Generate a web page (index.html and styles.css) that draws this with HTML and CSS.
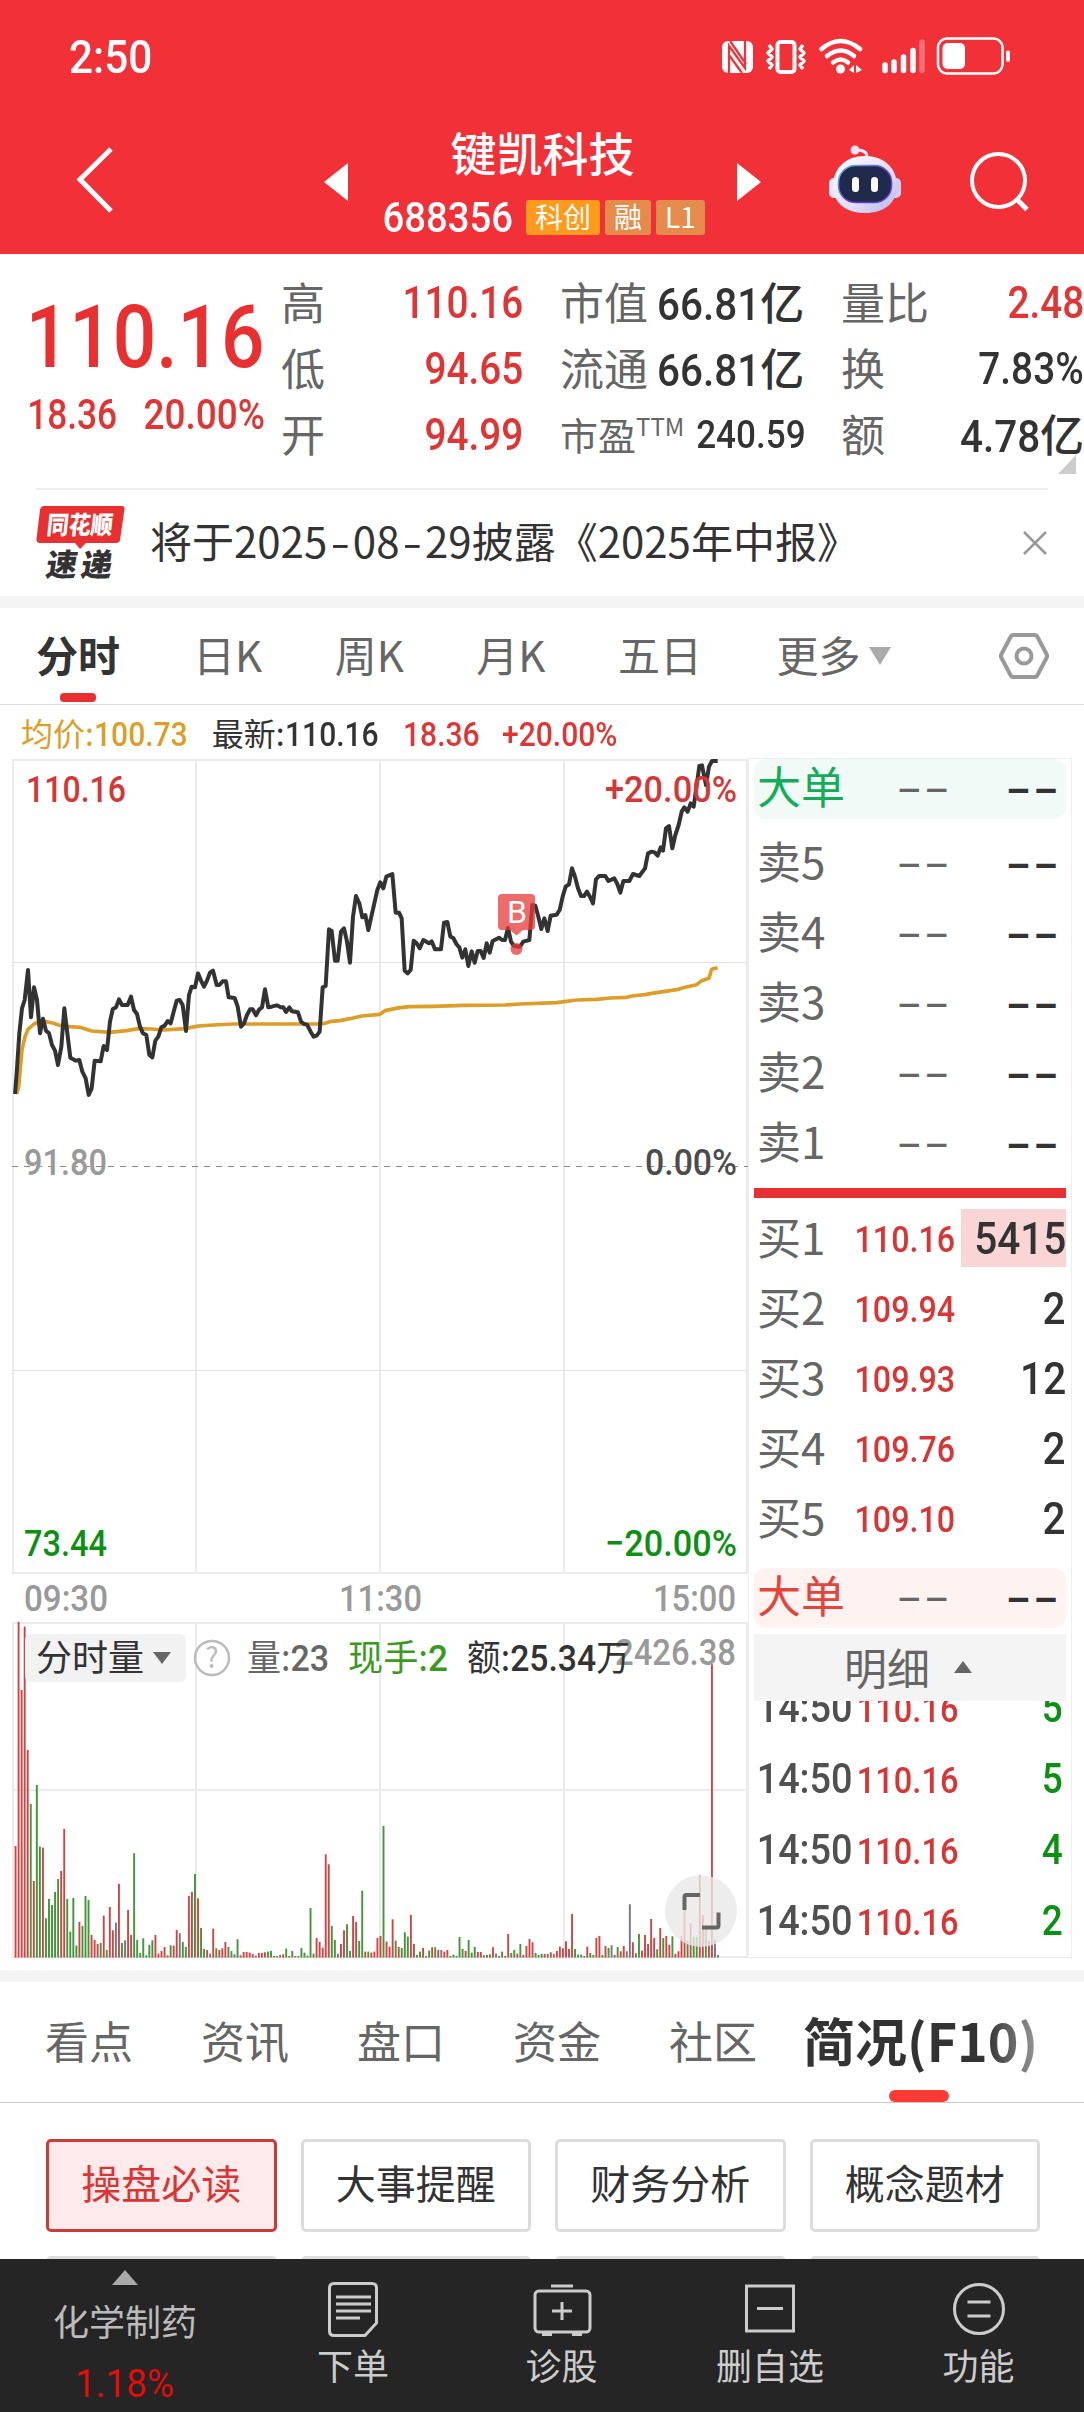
FILE: index.html
```html
<!DOCTYPE html>
<html lang="zh-CN">
<head>
    <meta charset="UTF-8">
    <meta name="viewport" content="width=device-width, initial-scale=1.0">
    <title>键凯科技 688356</title>
    <link rel="stylesheet" href="styles.css">
</head>
<body>
    <div class="app">
        <header class="header">
            <div class="status-bar">
                <span class="num clock">2:50</span>
                <svg class="status-icons" width="292" height="40" viewBox="0 0 292 40" fill="none" stroke="#fff">
                    <!-- NFC -->
                    <rect x="0" y="4" width="31" height="32" rx="6" fill="#fff" stroke="none"/>
                    <path d="M7 36V9L23 31V4M8 4L24 27M7 18L20 36" stroke="#f13038" stroke-width="2.2"/>
                    <!-- vibrate -->
                    <rect x="55.500" y="5" width="17" height="30" rx="3" stroke-width="4"/>
                    <path d="M47 8l3 4-4 4 4 4-4 4 4 4-3 4M81 8l-3 4 4 4-4 4 4 4-4 4 3 4" stroke-width="3.500" stroke-linejoin="round"/>
                    <!-- wifi -->
                    <g stroke-width="4.500" stroke-linecap="round">
                        <path d="M99.500 12q19-16 38.500 0"/>
                        <path d="M105 19q14-11 27 0"/>
                        <path d="M111 25.500q8-6 15 0"/>
                    </g>
                    <circle cx="118.500" cy="32" r="4.500" fill="#fff" stroke="none"/>
                    <path d="M132 28v8l-5-3zM134 36v-8l6 5z" fill="#fff" stroke="none"/>
                    <!-- signal -->
                    <g stroke-width="5.500" stroke-linecap="round">
                        <path d="M163 28v5.500M172 25v8.500M181.500 20v13.500M191 13.500v20"/>
                        <path d="M200 5v28.500" opacity=".3"/>
                    </g>
                    <!-- battery -->
                    <rect x="216" y="1.500" width="64.500" height="35" rx="9" stroke-width="2.500"/>
                    <rect x="220.500" y="6" width="22.500" height="26" rx="5" fill="#fff" stroke="none"/>
                    <rect x="284" y="13.500" width="4" height="11.500" rx="2" fill="#fff" stroke="none"/>
                </svg>
            </div>
            <div class="nav-bar">
                <svg class="back" width="40" height="70" viewBox="0 0 40 70">
                    <path d="M36 4L5 34.500L36 66" fill="none" stroke="#fff" stroke-width="5"/>
                </svg>
                <svg class="prev" width="24" height="38" viewBox="0 0 24 38"><path d="M24 0v38L0 19z" fill="#fff"/></svg>
                <div class="stock">
                    <div class="stock-name">键凯科技</div>
                    <div class="stock-code">
                        <span class="num code">688356</span>
                        <span class="tag tag-main">科创</span>
                        <span class="tag">融</span>
                        <span class="tag">L1</span>
                    </div>
                </div>
                <svg class="next" width="24" height="38" viewBox="0 0 24 38"><path d="M0 0v38l24-19z" fill="#fff"/></svg>
                <svg class="robot" width="74" height="70" viewBox="0 0 74 70">
                    <defs>
                        <linearGradient id="shell" x1="0" y1="0" x2="1" y2="1">
                            <stop offset="0" stop-color="#fff"/>
                            <stop offset=".6" stop-color="#e2def6"/>
                            <stop offset="1" stop-color="#b4b4f0"/>
                        </linearGradient>
                        <linearGradient id="rim" x1="0" y1="0" x2="1" y2="1">
                            <stop offset="0" stop-color="#5cc8e8"/>
                            <stop offset=".6" stop-color="#7030d8"/>
                            <stop offset="1" stop-color="#4a48c0"/>
                        </linearGradient>
                    </defs>
                    <path d="M39 12q0-7-10-7" fill="none" stroke="#eee6f6" stroke-width="3"/>
                    <circle cx="27" cy="5" r="4.500" fill="#f4e4f2"/>
                    <rect x="1" y="33" width="12" height="20" rx="5" fill="#e8e6fa"/>
                    <rect x="61" y="33" width="12" height="20" rx="5" fill="#cfcdf4"/>
                    <path d="M37 11C57 11 69 24 69 41C69 58 56 68 37 68C18 68 5 58 5 41C5 24 17 11 37 11z" fill="url(#shell)"/>
                    <rect x="10.500" y="20.500" width="53" height="37" rx="17" fill="#202a4c" stroke="url(#rim)" stroke-width="1.500"/>
                    <rect x="24" y="32" width="7" height="15" rx="3.500" fill="#fff"/>
                    <rect x="43" y="32" width="7" height="15" rx="3.500" fill="#fff"/>
                </svg>
                <svg class="search" width="62" height="62" viewBox="0 0 62 62" fill="none" stroke="#fff" stroke-width="4">
                    <circle cx="29.500" cy="29.500" r="26.500"/>
                    <path d="M47.500 48L58 58.500" stroke-width="5"/>
                </svg>
            </div>
        </header>

        <section class="quote">
            <div class="price-box">
                <div class="price"><span class="num">110.16</span></div>
                <div class="change"><span class="num diff">18.36</span><span class="num">20.00%</span></div>
            </div>
            <div class="stats">
                <div class="stat"><label>高</label><span class="num red">110.16</span></div>
                <div class="stat"><label>低</label><span class="num red">94.65</span></div>
                <div class="stat"><label>开</label><span class="num red">94.99</span></div>
            </div>
            <div class="stats">
                <div class="stat"><label>市值</label><span class="val"><span class="num">66.81</span>亿</span></div>
                <div class="stat"><label>流通</label><span class="val"><span class="num">66.81</span>亿</span></div>
                <div class="stat small"><label>市盈<sup>TTM</sup></label><span class="num">240.59</span></div>
            </div>
            <div class="stats last">
                <div class="stat"><label>量比</label><span class="num red">2.48</span></div>
                <div class="stat"><label>换</label><span class="num">7.83%</span></div>
                <div class="stat"><label>额</label><span class="val"><span class="num">4.78</span>亿</span></div>
            </div>
            <span class="corner"></span>
        </section>

        <section class="news">
            <svg class="news-logo" width="90" height="76" viewBox="0 0 90 76">
                <path d="M8 1H86Q89 1 88.500 4L84 35Q83.500 38 80 38H50L44 44L39 38H4Q0 38 .500 34L4 5Q5 1 8 1z" fill="#e83030"/>
                <text x="13" y="29" class="logo-top" textLength="66" lengthAdjust="spacingAndGlyphs" transform="skewX(-6)">同花顺</text>
                <text x="20" y="71" class="logo-bottom" textLength="66" transform="skewX(-9)">速递</text>
            </svg>
            <p>将于2025<i>-</i>08<i>-</i>29披露《2025年中报》</p>
            <svg class="close" width="26" height="26" viewBox="0 0 26 26"><path d="M2 2l22 22M24 2L2 24" stroke="#999" stroke-width="2.500"/></svg>
        </section>

        <nav class="period-tabs">
            <span class="tab active">分时</span>
            <span class="tab">日K</span>
            <span class="tab">周K</span>
            <span class="tab">月K</span>
            <span class="tab">五日</span>
            <span class="tab more">更多</span>
            <span class="more-arrow"></span>
            <svg width="50" height="48" viewBox="0 0 50 48" fill="none" stroke="#999" stroke-width="4">
                <path d="M14.500 3h21q2 0 3 2l9 17q1 2 0 4l-9 17q-1 2-3 2h-21q-2 0-3-2l-9-17q-1-2 0-4l9-17q1-2 3-2z"/>
                <circle cx="25" cy="24" r="7.500"/>
            </svg>
        </nav>

        <div class="info-line">
            <span class="orange">均价:<b class="num">100.73</b></span>
            <span>最新:<b class="num">110.16</b></span>
            <span class="red"><b class="num">18.36</b></span>
            <span class="red"><b class="num">+20.00%</b></span>
        </div>

        <section class="market">
            <svg class="chart" width="748" height="1200" viewBox="0 0 748 1200">
                <g class="grid">
                    <path d="M12 2H748M13 2V815M196 2V815M380 2V815M564 2V815M747 2V815M12 815H748"/>
                    <path d="M12 204.500H748M12 612.500H748" stroke-width="1"/>
                    <path d="M12 865H748M13 865V1199M196 865V1199M380 865V1199M564 865V1199M747 865V1199M12 1032H748M12 1199H748"/>
                </g>
                <path class="zero-line" d="M12 408.500H748"/>
                <g class="lines" transform="translate(0 -18) scale(.33333)">
                    <polyline class="avg" points="50,1062 56,1040 66,930 75,890 84,868 102,852 115,846 140,845 160,850 185,858 240,862 275,873 330,877 380,872 415,866 455,867 490,870 555,866 595,858 640,855 700,852 950,852 975,850 995,844 1020,842 1050,836 1085,828 1140,823 1155,812 1200,803 1230,800 1300,799 1390,796 1515,795 1560,792 1670,788 1730,780 1790,778 1830,774 1880,772 1895,768 1935,764 1955,760 2035,748 2055,742 2090,734 2105,722 2127,715 2135,688 2153,683"/>
                    <polyline class="now" points="45,1062 50,1000 58,880 66,805 74,780 84,690 93,832 102,742 111,780 120,880 129,836 138,872 147,880 156,915 165,932 174,975 184,920 193,805 202,880 211,953 228,962 238,960 247,995 257,1015 266,1065 275,1045 284,962 302,964 311,918 321,930 330,845 338,808 348,802 357,778 366,795 383,795 393,770 402,810 411,822 420,860 429,880 439,885 448,945 457,952 466,902 475,890 484,862 494,857 503,843 512,850 521,815 530,782 539,780 548,795 558,873 567,765 575,740 585,742 594,700 603,722 612,740 621,722 630,698 639,692 650,735 658,735 668,724 678,724 686,772 704,774 713,800 723,860 732,850 741,825 750,808 758,808 768,826 778,808 786,802 795,748 805,802 815,800 830,796 842,802 850,802 858,816 868,802 876,814 894,817 903,845 912,852 921,854 932,875 941,890 950,887 959,875 968,742 977,738 987,568 995,573 1005,662 1013,662 1023,575 1032,565 1041,605 1050,668 1059,530 1068,468 1078,490 1087,532 1096,525 1105,570 1114,530 1123,490 1132,450 1141,427 1150,445 1159,410 1177,402 1187,518 1197,518 1205,535 1214,692 1223,700 1232,690 1241,602 1250,610 1259,625 1270,600 1287,610 1295,604 1305,628 1323,628 1332,548 1342,546 1351,590 1360,594 1369,612 1378,622 1387,653 1396,628 1405,678 1415,634 1424,668 1433,633 1442,633 1451,654 1460,610 1469,638 1478,603 1497,593 1506,600 1515,600 1524,563 1533,605 1542,618 1560,620 1570,605 1588,600 1597,495 1606,497 1615,530 1624,567 1633,535 1643,573 1652,527 1670,524 1679,510 1688,470 1697,440 1707,433 1716,385 1725,410 1734,445 1743,468 1752,468 1761,455 1770,470 1779,490 1788,418 1797,408 1816,408 1825,423 1843,415 1852,432 1861,458 1870,423 1888,423 1899,402 1918,408 1935,385 1944,340 1955,335 1964,337 1973,347 1982,322 1989,332 1998,265 2007,258 2017,325 2026,285 2036,255 2045,215 2053,202 2063,215 2072,190 2081,200 2091,130 2098,78 2106,76 2118,135 2127,80 2136,63 2153,63"/>
                </g>

                <!-- buy point marker -->
                <g class="marker">
                    <path d="M502 136h29q4 0 4 4v28q0 4-4 4h-8l-6.500 5.500l-6.500-5.500h-8q-4 0-4-4v-28q0-4 4-4z"/>
                    <circle cx="516.500" cy="191" r="6"/>
                    <text x="517" y="165">B</text>
                </g>

                <g class="axis">
                    <text x="26" y="44" textLength="100" lengthAdjust="spacingAndGlyphs" class="t-red">110.16</text>
                    <text x="605" y="44" textLength="132" lengthAdjust="spacingAndGlyphs" class="t-red">+20.00%</text>
                    <text x="24" y="417" textLength="83" lengthAdjust="spacingAndGlyphs">91.80</text>
                    <text x="645" y="417" textLength="92" lengthAdjust="spacingAndGlyphs" class="t-dark">0.00%</text>
                    <text x="24" y="798" textLength="83" lengthAdjust="spacingAndGlyphs" class="t-green">73.44</text>
                    <text x="605" y="798" textLength="132" lengthAdjust="spacingAndGlyphs" class="t-green">−20.00%</text>
                    <text x="24" y="853" textLength="84" lengthAdjust="spacingAndGlyphs">09:30</text>
                    <text x="339" y="853" textLength="83" lengthAdjust="spacingAndGlyphs">11:30</text>
                    <text x="653" y="853" textLength="83" lengthAdjust="spacingAndGlyphs">15:00</text>
                    <text x="615" y="907" textLength="121" lengthAdjust="spacingAndGlyphs">2426.38</text>
                </g>

                <g id="volume-bars"></g>

                <g class="volume-head">
                    <rect x="25" y="876" width="161" height="48" rx="6" fill="#f2f2f2"/>
                    <text x="36" y="913">分时量</text>
                    <path d="M153 894h18l-9 12z" fill="#666"/>
                    <circle cx="212" cy="900" r="17" fill="none" stroke="#bbb" stroke-width="2.500"/>
                    <text x="212" y="910" class="help">?</text>
                    <text x="247" y="913" textLength="82" lengthAdjust="spacingAndGlyphs" fill="#666">量:<tspan class="v">23</tspan></text>
                    <text x="348" y="913" textLength="100" lengthAdjust="spacingAndGlyphs" fill="#3a9a20">现手:<tspan class="v">2</tspan></text>
                    <text x="467" y="913" textLength="163" lengthAdjust="spacingAndGlyphs">额:<tspan class="v">25.34</tspan>万</text>
                </g>

                <g class="expand">
                    <circle cx="701" cy="1153" r="36" fill="#e8e8e8" opacity=".8"/>
                    <path d="M684.500 1152v-13q0-2 2-2h13.500M702 1169.500h14.500q2 0 2-2v-13" fill="none" stroke="#666" stroke-width="4"/>
                </g>
            </svg>

            <div class="book">
                <div class="row big sell"><span class="name">大单</span><span class="dash">––</span><span class="dash dark">––</span></div>
                <div class="rows asks">
                    <div class="row"><span class="name">卖5</span><span class="dash">––</span><span class="dash dark">––</span></div>
                    <div class="row"><span class="name">卖4</span><span class="dash">––</span><span class="dash dark">––</span></div>
                    <div class="row"><span class="name">卖3</span><span class="dash">––</span><span class="dash dark">––</span></div>
                    <div class="row"><span class="name">卖2</span><span class="dash">––</span><span class="dash dark">––</span></div>
                    <div class="row"><span class="name">卖1</span><span class="dash">––</span><span class="dash dark">––</span></div>
                </div>
                <div class="split"></div>
                <div class="rows bids">
                    <div class="row"><span class="name">买1</span><span class="num bid">110.16</span><span class="lots hot"><b class="num">5415</b></span></div>
                    <div class="row"><span class="name">买2</span><span class="num bid">109.94</span><span class="lots"><b class="num">2</b></span></div>
                    <div class="row"><span class="name">买3</span><span class="num bid">109.93</span><span class="lots"><b class="num">12</b></span></div>
                    <div class="row"><span class="name">买4</span><span class="num bid">109.76</span><span class="lots"><b class="num">2</b></span></div>
                    <div class="row"><span class="name">买5</span><span class="num bid">109.10</span><span class="lots"><b class="num">2</b></span></div>
                </div>
                <div class="row big buy"><span class="name">大单</span><span class="dash">––</span><span class="dash dark">––</span></div>
                <div class="detail-head">明细<span class="up-arrow"></span></div>
                <div class="trades">
                    <div class="trade"><span class="num time">14:50</span><span class="num bid">110.16</span><span class="num lot">5</span></div>
                    <div class="trade"><span class="num time">14:50</span><span class="num bid">110.16</span><span class="num lot">5</span></div>
                    <div class="trade"><span class="num time">14:50</span><span class="num bid">110.16</span><span class="num lot">4</span></div>
                    <div class="trade"><span class="num time">14:50</span><span class="num bid">110.16</span><span class="num lot">2</span></div>
                </div>
            </div>
        </section>

        <nav class="page-tabs">
            <span>看点</span>
            <span>资讯</span>
            <span>盘口</span>
            <span>资金</span>
            <span>社区</span>
            <span class="active">简况(F10)</span>
        </nav>

        <section class="f10">
            <button class="active">操盘必读</button>
            <button>大事提醒</button>
            <button>财务分析</button>
            <button>概念题材</button>
            <button></button>
            <button></button>
            <button></button>
            <button></button>
        </section>

        <footer class="bottom-bar">
            <div class="sector">
                <span class="sector-arrow"></span>
                <span class="sector-name">化学制药</span>
                <span class="num sector-change">1.18%</span>
            </div>
            <div class="action">
                <svg width="60" height="60" viewBox="0 0 60 60">
                    <path d="M11 4.500H49Q53.500 4.500 53.500 9V44L42 56.500H11Q6.500 56.500 6.500 52V9Q6.500 4.500 11 4.500z"/>
                    <path d="M13 18h35M13 25h35M13 32h35M13 39h24"/>
                </svg>
                <span>下单</span>
            </div>
            <div class="action">
                <svg width="60" height="60" viewBox="0 0 60 60">
                    <rect x="3" y="12" width="55" height="41" rx="4"/>
                    <path d="M19 7h22M30 23v18M20 32h20M10 55.500h10M40 55.500h10"/>
                </svg>
                <span>诊股</span>
            </div>
            <div class="action">
                <svg width="60" height="60" viewBox="0 0 60 60">
                    <rect x="6.500" y="7" width="47" height="45"/>
                    <path d="M17 29.500h26"/>
                </svg>
                <span>删自选</span>
            </div>
            <div class="action">
                <svg width="60" height="60" viewBox="0 0 60 60">
                    <circle cx="30" cy="30" r="24.500"/>
                    <path d="M18.500 23h23M18.500 37h23"/>
                </svg>
                <span>功能</span>
            </div>
        </footer>
    </div>
    <script src="script.js"></script>
</body>
</html>
```
FILE: styles.css
```css
/* Base */
* {
    box-sizing: border-box;
}

body {
    margin: 0;
    background-color: #fff;
    color: #333;
    font-family: "Noto Sans CJK SC", sans-serif;
}

svg {
    display: block;
    flex-shrink: 0;
}

.app {
    display: flex;
    flex-direction: column;
    width: 1084px;
    height: 2412px;
    overflow: hidden;
}

.num {
    display: inline-block;
    font-family: Roboto, "Noto Sans CJK SC", sans-serif;
    font-weight: 500;
    transform: scaleX(.88);
    transform-origin: right center;
    white-space: nowrap;
}

.red {
    color: #e03535;
}

/* Header */
.header {
    flex: none;
    height: 254px;
    background-color: #f13038;
    color: #fff;
}

.status-bar {
    display: flex;
    justify-content: space-between;
    align-items: center;
    height: 114px;
    padding: 0 70px 0 69px;
}

.clock {
    font-size: 46px;
    transform: scaleX(.92);
    transform-origin: left center;
}

.nav-bar {
    display: flex;
    height: 140px;
}

.back {
    margin: 31px 209px 0 75px;
}

.prev,
.next {
    margin-top: 49px;
}

.stock {
    width: 389px;
    padding-top: 6px;
    text-align: center;
}

.stock-name {
    font-size: 46px;
    font-weight: 500;
    line-height: 62px;
}

.stock-code {
    display: flex;
    align-items: center;
    gap: 5px;
    height: 68px;
    margin-top: 3px;
    padding: 0 33px 4px 31px;
}

.code {
    margin-right: 8px;
    width: 134px;
    font-size: 43px;
    direction: rtl;
    transform: scaleX(.89);
}

.tag {
    height: 35px;
    padding: 0 9px;
    border-radius: 3px;
    background-color: #e58c4c;
    font-size: 28px;
    line-height: 32px;
    white-space: nowrap;
}

.tag-main {
    background-color: #ff9b1c;
}

.robot {
    margin: 31px 67px 0 67px;
}

.search {
    margin-top: 37px;
}

/* Quote */
.quote {
    position: relative;
    flex: none;
    display: grid;
    grid-template-columns: 281px 242px 240px 243px;
    height: 234px;
    padding-top: 14px;
}

.quote .stats:nth-child(3) {
    margin-left: 37px;
    width: 242px;
}

.quote .last {
    margin-left: 78px;
    width: 243px;
}

.price-box {
    width: 265px;
    color: #e83030;
}

.price {
    display: flex;
    justify-content: flex-end;
    height: 108px;
    margin-top: 15px;
    font-size: 88px;
    line-height: 108px;
}

.price .num {
    transform: scaleX(.87);
}

.change {
    display: flex;
    justify-content: flex-end;
    gap: 10px;
    margin-top: 1px;
    font-size: 42px;
    line-height: 46px;
    color: #e03535;
}

.change .diff {
    transform: scaleX(.84);
}

.stat {
    display: flex;
    justify-content: space-between;
    align-items: center;
    height: 66px;
    font-size: 44px;
    white-space: nowrap;
}

.stat > .num {
    padding-top: 4px;
}

.stat label {
    color: #666;
}

.stat .val {
    font-weight: 500;
}

.stat .val .num {
    transform: scaleX(.92);
}

.small label {
    font-size: 38px;
}

.small .num {
    font-size: 39px;
    transform: scaleX(.9);
}

.small sup {
    font-size: 24px;
    line-height: 0;
}

.corner {
    position: absolute;
    left: 1058px;
    top: 201px;
    border-left: 18px solid transparent;
    border-bottom: 19px solid #ccc;
}

/* News */
.news {
    flex: none;
    display: flex;
    align-items: center;
    height: 108px;
    margin: 0 36px;
    border-top: 2px solid #eee;
}

.news p {
    flex: 1;
    margin: 0 0 7px 24px;
    font-size: 42px;
    white-space: nowrap;
}

.news i {
    display: inline-block;
    margin: 0 5.500px;
    font-style: normal;
    transform: scaleX(1.35);
}

.news-logo {
    font-weight: 900;
}

.logo-top {
    font-size: 25px;
    fill: #fff;
}

.logo-bottom {
    font-size: 31px;
    fill: #333;
}

/* Period tabs */
.period-tabs {
    flex: none;
    display: flex;
    align-items: center;
    height: 109px;
    padding: 0 35px 0 36px;
    border-top: 12px solid #f4f4f4;
    border-bottom: 1px solid #ddd;
    font-size: 42px;
    color: #666;
}

.tab {
    margin: 0 72.500px 5px 0;
}

.tab.active {
    position: relative;
    margin-right: 73px;
    font-weight: 700;
    color: #333;
}

.tab.active::after {
    content: "";
    position: absolute;
    left: 24px;
    bottom: -18px;
    width: 36px;
    height: 9px;
    border-radius: 4px;
    background-color: #e93030;
}

.tab.more {
    margin-left: 2px;
}

.more-arrow {
    margin: 0 auto 0 -64px;
    border: 11px solid transparent;
    border-top: 18px solid #aaa;
    border-bottom: 0;
}

/* Latest price line */
.info-line {
    flex: none;
    display: flex;
    height: 53px;
    padding-left: 21px;
    font-size: 32px;
    line-height: 55px;
}

.info-line .num {
    font-size: 33px;
    transform: scaleX(.91);
    transform-origin: left center;
}

.info-line span {
    margin-right: 15px;
}

.orange {
    color: #dc9e28;
}

/* Chart */
.market {
    flex: none;
    display: flex;
    height: 1200px;
}

.grid path {
    fill: none;
    stroke: #ebebeb;
    stroke-width: 2;
}

.grid path[stroke-width] {
    stroke: #e0e0e0;
    stroke-width: 1;
}

.zero-line {
    stroke: #888;
    stroke-dasharray: 6 6;
}

.lines polyline {
    fill: none;
    stroke-width: 12;
    stroke-linejoin: round;
}

.lines .avg {
    stroke: #dc9e28;
    stroke-width: 11;
}

.now {
    stroke: #333;
}

.marker {
    fill: #e83a3a;
    fill-opacity: .75;
}

.marker text {
    fill: #fff;
    fill-opacity: 1;
    font-family: Roboto, sans-serif;
    font-size: 32px;
    text-anchor: middle;
}

.axis {
    fill: #999;
    font-family: Roboto, sans-serif;
    font-size: 37px;
    font-weight: 500;
}

.t-red {
    fill: #d23838;
}

.t-green {
    fill: #0d8f14;
}

.t-dark {
    fill: #4c4c4c;
}

.volume-head {
    fill: #333;
    font-size: 36px;
}

.volume-head .v {
    font-family: Roboto, sans-serif;
    font-weight: 500;
}

.volume-head .help {
    fill: #bbb;
    font-size: 28px;
    text-anchor: middle;
}

/* Order book */
.book {
    width: 324px;
    padding: 0 5px;
    border: 1px solid #eee;
    overflow: hidden;
}

.row {
    display: flex;
    align-items: center;
    height: 70px;
    padding-left: 3px;
    font-size: 44px;
}

.row .name {
    width: 97px;
    margin-bottom: 4px;
    line-height: 56px;
    color: #666;
}

.big {
    height: 60px;
    border-radius: 12px;
}

.big .name,
.big .dash {
    margin-bottom: 9px;
}

.sell {
    background-color: #f1faf6;
}

.sell .name {
    color: #12ad58;
}

.buy {
    background-color: #fff3f2;
}

.buy .name {
    color: #e3453c;
}

.dash {
    width: 118px;
    margin-bottom: 4px;
    padding-right: 8px;
    font-family: "Open Sans", sans-serif;
    font-weight: 500;
    font-size: 46px;
    line-height: 56px;
    letter-spacing: 4.500px;
    text-align: right;
    color: #666;
}

.dash.dark {
    width: 111px;
    padding-right: 4px;
    font-weight: 600;
    color: #333;
}

.asks {
    height: 369px;
    padding-top: 8px;
}

.split {
    height: 10px;
    background-color: #e63031;
}

.bids {
    height: 370px;
    padding-top: 5px;
}

.bid {
    font-size: 37px;
    color: #d63636;
}

.row .bid {
    width: 101px;
    padding-top: 2px;
    direction: rtl;
    transform: scaleX(.87);
}

.lots {
    display: flex;
    justify-content: flex-end;
    align-items: center;
    width: 105px;
    height: 58px;
    margin-left: 6px;
    font-size: 45px;
}

.lots .num {
    transform: scaleX(.9);
}

.hot {
    background-color: #f9d5d5;
}

.detail-head {
    display: flex;
    justify-content: center;
    align-items: center;
    height: 67px;
    margin-top: 6px;
    padding: 0 4px 4px 0;
    background-color: #f4f4f4;
    font-size: 43px;
    color: #666;
}

.up-arrow {
    margin: 3px 0 0 24px;
    border: 9px solid transparent;
    border-bottom: 12px solid #666;
    border-top: 0;
}

.trades {
    display: flex;
    flex-direction: column;
    justify-content: flex-end;
    height: 255px;
    overflow: hidden;
}

.trade {
    flex: none;
    display: grid;
    grid-template-columns: 99px 105px 105px;
    justify-items: end;
    align-items: center;
    height: 71px;
}

.trade .time {
    font-size: 42px;
    font-weight: 500;
    color: #505050;
    transform: scaleX(.9);
}

.trade .bid {
    padding-top: 4px;
}

.trade .lot {
    font-size: 42px;
    color: #0d8f14;
}

/* Page tabs */
.page-tabs {
    flex: none;
    display: flex;
    align-items: center;
    height: 133px;
    margin-top: 12px;
    padding-left: 45px;
    border-top: 12px solid #f4f4f4;
    border-bottom: 1px solid #c8c8c8;
    font-size: 44px;
    color: #666;
    white-space: nowrap;
}

.page-tabs span {
    margin: 0 68px 5px 0;
}

.page-tabs .active {
    margin: 0 0 5px -22px;
    font-size: 52px;
    font-weight: 700;
    color: transparent;
    background: linear-gradient(to right, #333 78%, #999 100%);
    -webkit-background-clip: text;
    background-clip: text;
}

.page-tabs::after {
    content: "";
    align-self: flex-end;
    width: 60px;
    height: 12px;
    margin-left: -149px;
    border-radius: 6px;
    background-color: #fb3b33;
}

/* F10 shortcuts */
.f10 {
    flex: none;
    display: grid;
    grid-template-columns: repeat(4, 230.500px);
    grid-auto-rows: 93px;
    gap: 24px;
    height: 156px;
    padding: 36px 0 0 46px;
    overflow: hidden;
}

.f10 button {
    padding: 0 0 8px;
    border: 3px solid #ddd;
    border-radius: 5px;
    background-color: #fff;
    color: #333;
    font-family: inherit;
    font-size: 40px;
}

.f10 .active {
    border-color: #cc3b3c;
    background-color: #fdeaea;
    color: #d83636;
}

/* Bottom bar */
.bottom-bar {
    flex: none;
    display: grid;
    grid-template-columns: 249px 208px 209px 208px 209px;
    height: 153px;
    background-color: #252525;
    color: #ccc;
    font-size: 36px;
}

.sector {
    display: flex;
    flex-direction: column;
    align-items: center;
    padding: 11px 0 0 1px;
    color: #bbb;
}

.sector-arrow {
    border: 13px solid transparent;
    border-bottom: 15px solid #aaa;
    border-top: 0;
}

.sector-name {
    margin-top: 8px;
    line-height: 54px;
}

.sector-change {
    margin-top: 14px;
    font-size: 38px;
    font-weight: 400;
    line-height: 46px;
    color: #e80c0c;
    transform: scaleX(.97);
    transform-origin: center;
}

.action {
    display: flex;
    flex-direction: column;
    align-items: center;
    padding-top: 20px;
}

.action svg {
    fill: none;
    stroke: #ccc;
    stroke-width: 3;
}

.action span {
    line-height: 51px;
}
```
FILE: script.js
```js
// Minute volumes: height in thirds of a pixel + direction (r = up, g = down, k = flat)
const volumes = `335r 1007r 803r 993r 623r 461g 230r 518g 333g 330r 118g 176g 158g 197g 236g 260r 386r 176g 78g 179g
36g 107r 95g 185g 173g 68r 53r 41r 44g 126r 23g 152r 82r 105k 221r 44g 52k 143r 68r 313g
53g 14g 58g 7g 38g 52g 68r 12r 20r 32r 7r 37g 36r 83r 73k 47g 32g 185r 197r 251g
178r 89g 26g 23r 12k 87r 28g 23r 28r 47r 32g 20k 10g 55g 7r 17r 17r 15r 11r 6k
14r 14r 16r 18g 20g 5r 5k 8g 10r 27g 5r 20g 5k 5g 29g 15g 6g 149g 12g 59r
47r 30r 310r 280r 95g 53g 11k 41r 82r 100g 20g 125r 107r 50g 201g 18r 18g 15r 18r 59r
65r 395g 48r 33r 115r 51g 32r 29g 76g 63g 128r 41r 8g 18g 29r 5g 21g 31r 31g 23r
23k 18r 23r 5g 9g 5g 62g 26g 20r 53g 15g 32g 17r 17r 7g 8r 10g 31r 12k 5r
18g 5r 71r 14g 23g 12r 41g 8r 35r 56r 46r 14g 8g 11g 11r 11g 16r 11k 20r 33r
28r 49r 26r 131r 26g 9g 9g 5k 33r 14g 8g 59r 65r 8g 35r 29g 37k 8r 32g 19r
35r 19k 160k 46r 13g 71g 21r 68r 41r 116r 59r 25g 89r 59g 65r 38r 64g 11r 19r 65r
160r 50g 103r 62g 62g 248r 128r 88g 50r 880r 55k 8k`.split(/\s+/);

const colors = { r: '#cc4646', g: '#43943a', k: '#777' };
const bars = document.getElementById('volume-bars');
const baseline = 1199.6;

volumes.forEach((item, i) => {
    const height = parseInt(item) / 3;
    const rect = document.createElementNS('http://www.w3.org/2000/svg', 'rect');
    rect.setAttribute('x', (14.6 + i * 3.041).toFixed(2));
    rect.setAttribute('y', (baseline - height).toFixed(2));
    rect.setAttribute('width', 1.9);
    rect.setAttribute('height', height.toFixed(2));
    rect.setAttribute('fill', colors[item.slice(-1)]);
    bars.appendChild(rect);
});
```
